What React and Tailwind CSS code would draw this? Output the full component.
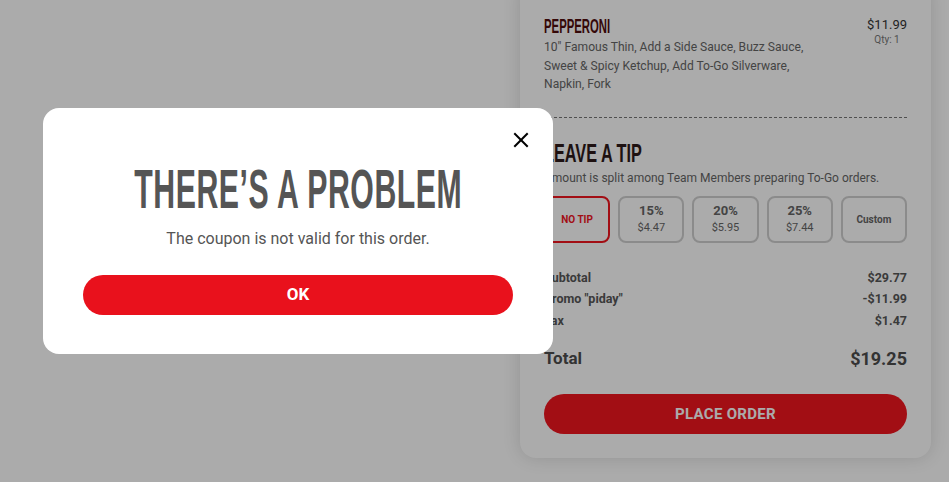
const tips = [
  { label: 'NO TIP', active: true },
  { label: '15%', amount: '$4.47' },
  { label: '20%', amount: '$5.95' },
  { label: '25%', amount: '$7.44' },
  { label: 'Custom' },
];

const totals = [
  { label: 'Subtotal', value: '$29.77' },
  { label: 'Promo "piday"', value: '-$11.99' },
  { label: 'Tax', value: '$1.47' },
];

const heading = "font-['Liberation_Sans',Arial,sans-serif] font-bold whitespace-nowrap";

const OrderCard = () => (
  <div className="w-[411px] h-[478px] -mt-[20px] bg-white rounded-2xl shadow-[0_0_18px_rgba(0,0,0,0.14)] px-6 pt-[34px] pb-6 flex flex-col">
    {/* Item */}
    <div className="flex justify-between">
      <div>
        <h3 className={`${heading} text-[21px] leading-[24px] text-[#4f0c0c] origin-left scale-x-[0.54]`}>
          PEPPERONI
        </h3>
        <p className="w-[270px] text-[12.1px] leading-[18.5px] text-[#666]">
          10" Famous Thin, Add a Side Sauce, Buzz Sauce, Sweet &amp; Spicy Ketchup, Add To-Go Silverware, Napkin, Fork
        </p>
      </div>
      <div className="flex flex-col items-center pt-[2px]">
        <span className="text-[13px] leading-[18px] text-[#333]">$11.99</span>
        <span className="text-[10px] leading-[12px] text-[#777]">Qty: 1</span>
      </div>
    </div>

    <div className="mt-[23px] border-t border-dashed border-[#777]" />

    {/* Tip */}
    <h2 className={`${heading} mt-[21px] text-[25px] leading-[28px] text-[#2e1a1a] origin-left scale-x-[0.65]`}>
      LEAVE A TIP
    </h2>
    <p className="mt-[2px] whitespace-nowrap text-[12px] leading-[18px] text-[#666]">
      Amount is split among Team Members preparing To-Go orders.
    </p>
    <div className="mt-[9px] grid grid-cols-5 gap-2">
      {tips.map((t) => (
        <button
          key={t.label}
          className={`h-[47px] rounded-lg border-2 flex flex-col items-center justify-center ${
            t.active ? 'border-[#f2151f] text-[#f2151f]' : 'border-[#d0d0d0] text-[#666]'
          }`}
        >
          {t.amount ? (
            <>
              <span className="text-[13px] leading-[16px] font-bold">{t.label}</span>
              <span className="text-[11px] leading-[14px] mt-[2px]">{t.amount}</span>
            </>
          ) : (
            <span className="text-[10px] font-bold">{t.label}</span>
          )}
        </button>
      ))}
    </div>

    {/* Totals */}
    <div className="mt-[27px] flex flex-col gap-[5px]">
      {totals.map((r) => (
        <div key={r.label} className="flex justify-between text-[12.5px] leading-[16.5px] font-bold text-[#575757]">
          <span>{r.label}</span>
          <span>{r.value}</span>
        </div>
      ))}
    </div>
    <div className="mt-[16px] flex justify-between items-center font-bold text-[#4d4d4d]">
      <span className="text-[17px]">Total</span>
      <span className="text-[18px]">$19.25</span>
    </div>

    <button className="mt-auto h-10 rounded-full bg-[#f2151f] text-white text-[15px] font-bold tracking-[0.3px]">
      PLACE ORDER
    </button>
  </div>
);

const ProblemModal = () => (
  <div className="absolute left-[43px] top-[108px] w-[510px] bg-white rounded-2xl px-10 pt-[54px] pb-[39px]">
    <button className="absolute right-[24px] top-[24px] text-black">
      <svg width="16" height="16" viewBox="0 0 16 16" fill="none" stroke="currentColor" strokeWidth="2" strokeLinecap="square">
        <line x1="2" y1="2" x2="14" y2="14" />
        <line x1="14" y1="2" x2="2" y2="14" />
      </svg>
    </button>
    <div className="flex justify-center">
      <h1 className={`${heading} text-[55px] leading-[55px] tracking-[1px] text-[#555] scale-x-[0.55]`}>
        THERE’S A PROBLEM
      </h1>
    </div>
    <p className="mt-[10px] text-center text-[16px] leading-[24px] text-[#555]">
      The coupon is not valid for this order.
    </p>
    <button className="mt-6 w-full h-10 rounded-full bg-[#e9111c] text-white text-[17px] font-bold">
      OK
    </button>
  </div>
);

export default function App() {
  return (
    <div className="relative h-[482px] overflow-hidden bg-white font-['Roboto',sans-serif]">
      <div className="flex justify-end pr-[18px]">
        <OrderCard />
      </div>

      {/* Dim overlay + dialog */}
      <div className="absolute inset-0 bg-black/[0.33]">
        <ProblemModal />
      </div>
    </div>
  );
}
